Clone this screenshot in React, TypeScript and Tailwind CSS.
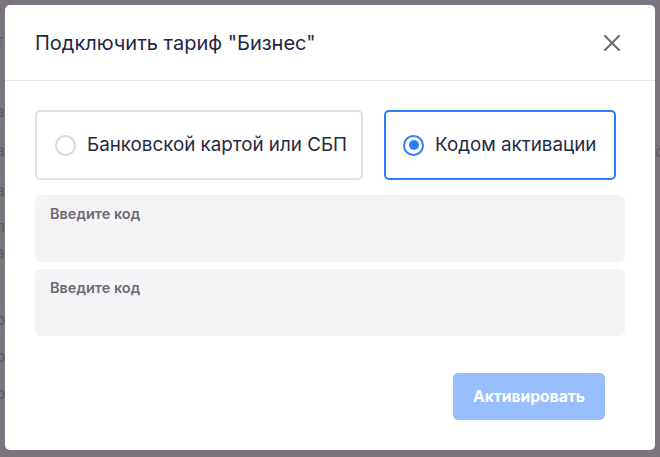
import { useState } from 'react';

const sans = { fontFamily: 'Inter, "Noto Sans", sans-serif' };

function Radio({ checked }: { checked: boolean }) {
  return checked ? (
    <span className="flex h-[21px] w-[21px] shrink-0 items-center justify-center rounded-full border-[2.5px] border-[#2d7ff9]">
      <span className="h-[10px] w-[10px] rounded-full bg-[#2d7ff9]" />
    </span>
  ) : (
    <span className="h-[21px] w-[21px] shrink-0 rounded-full border-2 border-[#d9d9de]" />
  );
}

export default function App() {
  const [method, setMethod] = useState<'card' | 'code'>('code');
  const [codes, setCodes] = useState(['', '']);

  // faint page content behind the overlay, only edges peek out
  const leftBits = [
    ['т', 30], ['а', 101], ['а', 140], ['а', 180], ['л', 216], ['а', 242], ['р', 309], ['р', 346], ['р', 383],
  ] as const;

  return (
    <div className="relative h-[457px] w-[660px] overflow-hidden bg-[#7a757c]" style={sans}>
      {leftBits.map(([ch, top], i) => (
        <span key={i} className="absolute left-[-4px] text-[15px] text-[#5a5560]" style={{ top }}>
          {ch}
        </span>
      ))}
      <span className="absolute right-[-4px] top-[141px] text-[15px] text-[#5a5560]">с</span>

      <div className="relative ml-[5px] mt-[5px] flex h-[445px] w-[650px] flex-col rounded-[5px] bg-white">
        <div className="flex h-[76px] shrink-0 items-center justify-between border-b border-[#e8e8ec] pl-[30px] pr-[34px]">
          <h1 className="text-[20px] font-normal leading-none text-[#1d2744]">Подключить тариф "Бизнес"</h1>
          <button className="flex h-[18px] w-[18px] items-center justify-center">
            <svg width="18" height="18" viewBox="0 0 18 18" fill="none" stroke="#6f6875" strokeWidth="2" strokeLinecap="round">
              <path d="M2 2L16 16M16 2L2 16" />
            </svg>
          </button>
        </div>

        <div className="flex flex-1 flex-col px-[30px] pt-[29px]">
          <div className="flex gap-[21px]">
            <button
              onClick={() => setMethod('card')}
              className={`flex h-[70px] w-[328px] items-center gap-[11px] rounded-[5px] border-2 pl-[18px] ${
                method === 'card' ? 'border-[#2d7ff9]' : 'border-[#e1e1e5]'
              }`}
            >
              <Radio checked={method === 'card'} />
              <span className="whitespace-nowrap text-[18.8px] text-[#1f2a44]">Банковской картой или СБП</span>
            </button>
            <button
              onClick={() => setMethod('code')}
              className={`flex h-[70px] w-[232px] items-center gap-[11px] rounded-[5px] border-2 pl-[17px] ${
                method === 'code' ? 'border-[#2d7ff9]' : 'border-[#e1e1e5]'
              }`}
            >
              <Radio checked={method === 'code'} />
              <span className="whitespace-nowrap text-[18.8px] text-[#1f2a44]">Кодом активации</span>
            </button>
          </div>

          <div className="mt-[15px] flex w-[590px] flex-col gap-[7px]">
            {codes.map((c, i) => (
              <label key={i} className="flex h-[67px] flex-col rounded-[6px] bg-[#f4f4f6] px-[15px] pt-[10px]">
                <span className="text-[14.5px] font-semibold leading-[18px] text-[#6e6a75]">Введите код</span>
                <input
                  value={c}
                  onChange={e => setCodes(codes.map((v, j) => (j === i ? e.target.value : v)))}
                  className="mt-1 bg-transparent text-[15px] text-[#1f2a44] outline-none"
                />
              </label>
            ))}
          </div>

          <div className="mt-[37px] flex justify-end pr-[20px]">
            <button disabled className="h-[47px] w-[152px] rounded-[5px] bg-[#99befd] text-[15.6px] font-bold text-white">
              Активировать
            </button>
          </div>
        </div>
      </div>
    </div>
  );
}
